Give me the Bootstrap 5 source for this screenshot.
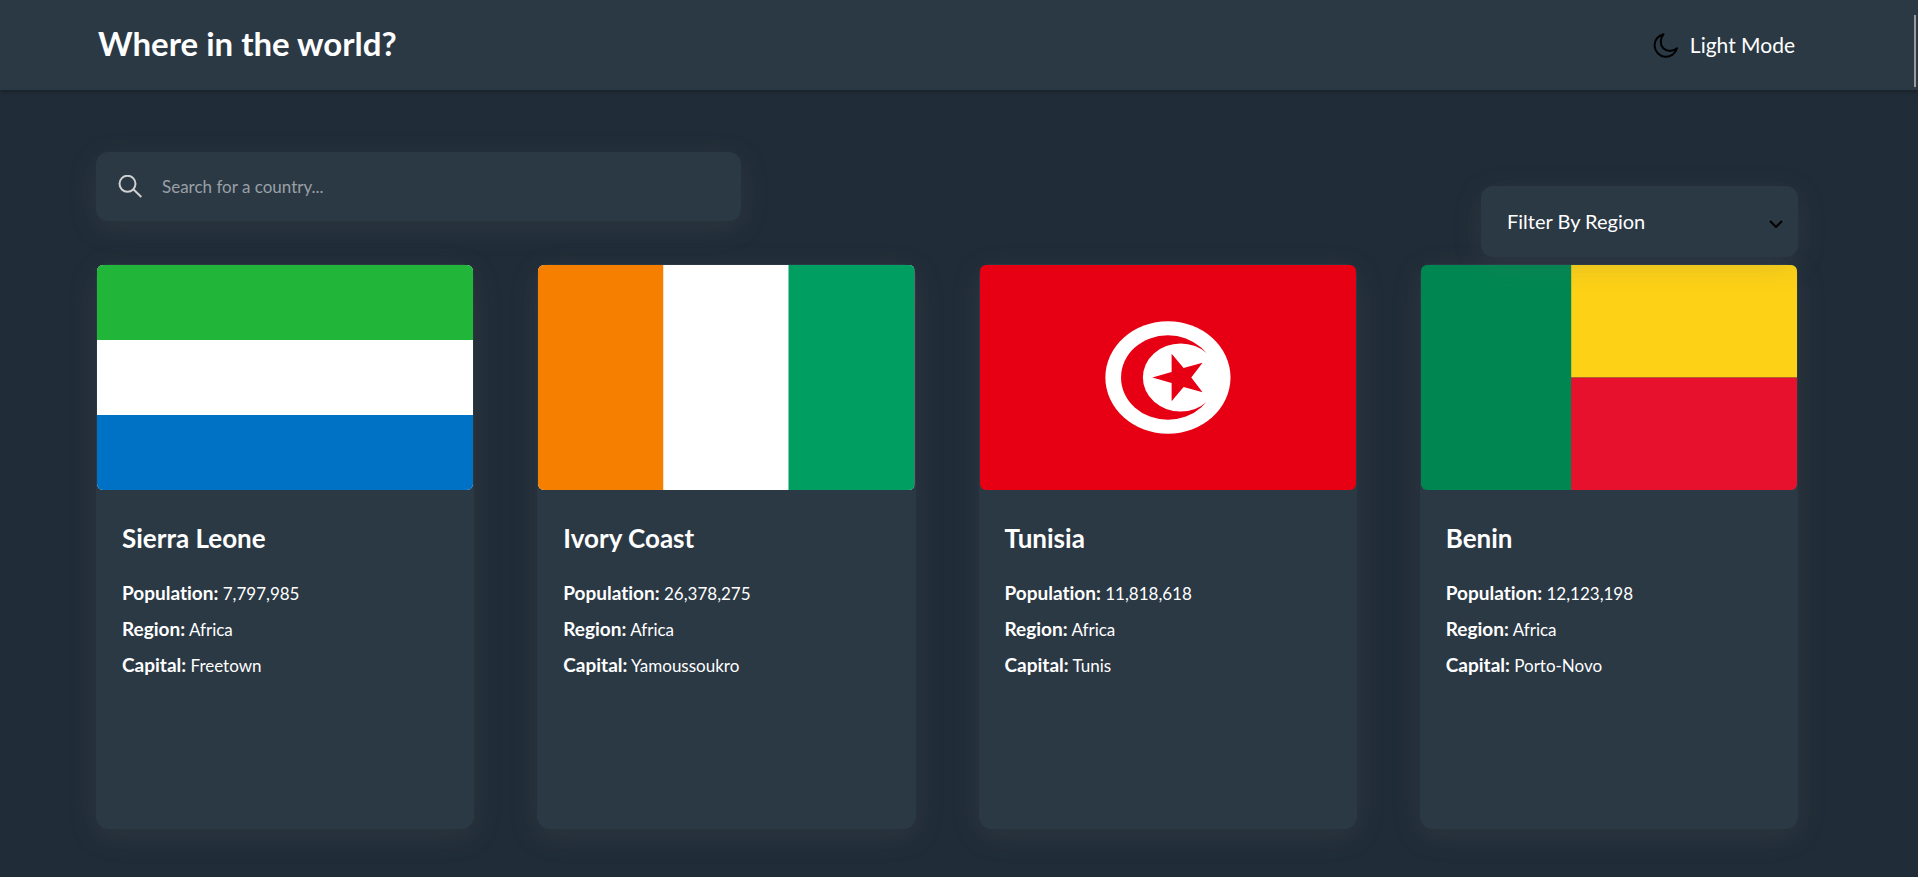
<!DOCTYPE html>
<html lang="en">
<head>
<meta charset="utf-8">
<meta name="viewport" content="width=device-width, initial-scale=1">
<title>Where in the world?</title>
<link href="https://cdn.jsdelivr.net/npm/bootstrap@5.3.0/dist/css/bootstrap.min.css" rel="stylesheet">
<style>
  :root {
    --page: #202c37;
    --element: #2b3945;
    --glow: 0 7px 29px 0 rgba(100, 100, 111, .2);
  }
  body {
    background: var(--page);
    color: #fff;
    font-family: Lato, "Liberation Sans", sans-serif;
    font-variant-ligatures: none;
  }
  .page-x { padding-left: 96px; padding-right: 120px; }
  .site-header {
    background: var(--element);
    min-height: 90px;
    padding: 0 123px 0 98px;
    box-shadow: 0 2px 4px rgba(0, 0, 0, .25);
  }
  .site-title { font-size: 33px; line-height: 40px; font-weight: 700; }
  .mode-btn, .mode-btn:hover { color: #fff; font-size: 21px; line-height: 28px; gap: 12px; }
  .toolbar { padding-top: 62px; margin-bottom: 7px; }
  .search-box {
    flex: 0 1 645px;
    height: 69px;
    padding: 0 22px;
    gap: 20px;
    background: var(--element);
    border-radius: 12px;
    box-shadow: var(--glow);
  }
  .search-box input, .search-box input:focus {
    background: transparent;
    border: 0;
    box-shadow: none;
    color: #fff;
    font-size: 17px;
    line-height: 24px;
  }
  .search-box input::placeholder { color: #9aa0a6; opacity: 1; }
  .region-wrap { flex: 0 1 317px; margin-top: 34px; z-index: 1; }
  .region-select {
    appearance: none;
    height: 71px;
    padding: 0 40px 2px 26px;
    border: 0;
    border-radius: 12px;
    background: var(--element);
    color: #fff;
    font-size: 20px;
    box-shadow: var(--glow);
  }
  .region-arrow { right: 15px; top: 34px; pointer-events: none; }
  .countries { --bs-gutter-x: 63px; --bs-gutter-y: 48px; padding-bottom: 48px; }
  .country {
    background: var(--element);
    color: #fff;
    border: 1px solid var(--element);
    border-radius: 12px;
    box-shadow: var(--glow);
  }
  .flag { height: 225px; border-radius: 6px; }
  .country-body { min-height: 338px; padding: 32px 25px; }
  .country-name { font-size: 26px; line-height: 32px; font-weight: 700; margin-bottom: 22px; }
  .fact { font-size: 17px; line-height: 36px; margin: 0; }
  .fact strong { font-size: 19px; line-height: 24px; font-weight: 700; }
  .scroll-thumb { width: 2px; height: 72px; top: 15px; right: 2px; background: #9b9b9b; }
</style>
</head>
<body>
<header class="site-header d-flex align-items-center justify-content-between">
  <h1 class="site-title mb-1">Where in the world?</h1>
  <button type="button" class="mode-btn btn p-0 border-0 d-flex align-items-center">
    <svg width="25" height="25" viewBox="0 0 25 25" fill="none" stroke="#000" stroke-width="2" stroke-linejoin="round" aria-hidden="true">
      <path d="M10.500 1.200A11.400 11.400 0 1 0 24 15.300C20 18.800 14 18.900 10.300 15.200 6.800 11.700 7 5.500 10.500 1.200Z"/>
    </svg>
    <span>Light Mode</span>
  </button>
</header>
<div class="scroll-thumb position-absolute"></div>

<main class="page-x">
  <div class="toolbar d-flex justify-content-between align-items-start">
    <label class="search-box d-flex align-items-center">
      <svg class="flex-shrink-0" width="24" height="24" viewBox="0 0 24 24" fill="none" stroke="#d0d0d0" stroke-width="2" aria-hidden="true">
        <circle cx="9.500" cy="8.800" r="8"/><path d="M15.300 14.300 23.300 22"/>
      </svg>
      <input type="text" class="form-control p-0" placeholder="Search for a country..." aria-label="Search for a country">
    </label>
    <div class="region-wrap position-relative">
      <select class="region-select w-100 d-block" aria-label="Filter By Region">
        <option>Filter By Region</option><option>Africa</option><option>Americas</option><option>Asia</option><option>Europe</option><option>Oceania</option>
      </select>
      <svg class="region-arrow position-absolute" width="14" height="8" viewBox="0 0 14 8" fill="none" stroke="#000" stroke-width="2" aria-hidden="true"><path d="M1 1l6 6 6-6"/></svg>
    </div>
  </div>

  <div class="countries row row-cols-1 row-cols-md-2 row-cols-xl-4">
    <div class="col">
      <article class="country card h-100">
        <svg class="flag w-100 d-block" viewBox="0 0 377 225" preserveAspectRatio="none" role="img" aria-label="Flag of Sierra Leone">
          <rect width="377" height="225" fill="#fff"/><rect width="377" height="75" fill="#21b53a"/><rect y="150" width="377" height="75" fill="#0072c6"/>
        </svg>
        <div class="country-body">
          <h2 class="country-name">Sierra Leone</h2>
          <p class="fact"><strong>Population:</strong> 7,797,985</p>
          <p class="fact"><strong>Region:</strong> Africa</p>
          <p class="fact"><strong>Capital:</strong> Freetown</p>
        </div>
      </article>
    </div>
    <div class="col">
      <article class="country card h-100">
        <svg class="flag w-100 d-block" viewBox="0 0 377 225" preserveAspectRatio="none" role="img" aria-label="Flag of Ivory Coast">
          <rect width="377" height="225" fill="#fff"/><rect width="125.500" height="225" fill="#f77f00"/><rect x="251" width="126" height="225" fill="#009e60"/>
        </svg>
        <div class="country-body">
          <h2 class="country-name">Ivory Coast</h2>
          <p class="fact"><strong>Population:</strong> 26,378,275</p>
          <p class="fact"><strong>Region:</strong> Africa</p>
          <p class="fact"><strong>Capital:</strong> Yamoussoukro</p>
        </div>
      </article>
    </div>
    <div class="col">
      <article class="country card h-100">
        <svg class="flag w-100 d-block" viewBox="0 0 377 225" preserveAspectRatio="none" role="img" aria-label="Flag of Tunisia">
          <rect width="377" height="225" fill="#e70013"/>
          <ellipse cx="188.300" cy="112.500" rx="62.700" ry="56.300" fill="#fff"/>
          <ellipse cx="188.300" cy="112.500" rx="47" ry="42.300" fill="#e70013"/>
          <ellipse cx="201" cy="112.500" rx="37.800" ry="34" fill="#fff"/>
          <path d="M172.700 112.500 192 107V88.700L204 103 223 97.700 211.700 112.500 223 127.300 204 122 192 136.300V118Z" fill="#e70013"/>
        </svg>
        <div class="country-body">
          <h2 class="country-name">Tunisia</h2>
          <p class="fact"><strong>Population:</strong> 11,818,618</p>
          <p class="fact"><strong>Region:</strong> Africa</p>
          <p class="fact"><strong>Capital:</strong> Tunis</p>
        </div>
      </article>
    </div>
    <div class="col">
      <article class="country card h-100">
        <svg class="flag w-100 d-block" viewBox="0 0 377 225" preserveAspectRatio="none" role="img" aria-label="Flag of Benin">
          <rect width="377" height="225" fill="#008751"/><rect x="150.500" width="226.500" height="112.500" fill="#fcd116"/><rect x="150.500" y="112.500" width="226.500" height="112.500" fill="#e8112d"/>
        </svg>
        <div class="country-body">
          <h2 class="country-name">Benin</h2>
          <p class="fact"><strong>Population:</strong> 12,123,198</p>
          <p class="fact"><strong>Region:</strong> Africa</p>
          <p class="fact"><strong>Capital:</strong> Porto-Novo</p>
        </div>
      </article>
    </div>
  </div>
</main>
<script src="https://cdn.jsdelivr.net/npm/bootstrap@5.3.0/dist/js/bootstrap.bundle.min.js"></script>
</body>
</html>
